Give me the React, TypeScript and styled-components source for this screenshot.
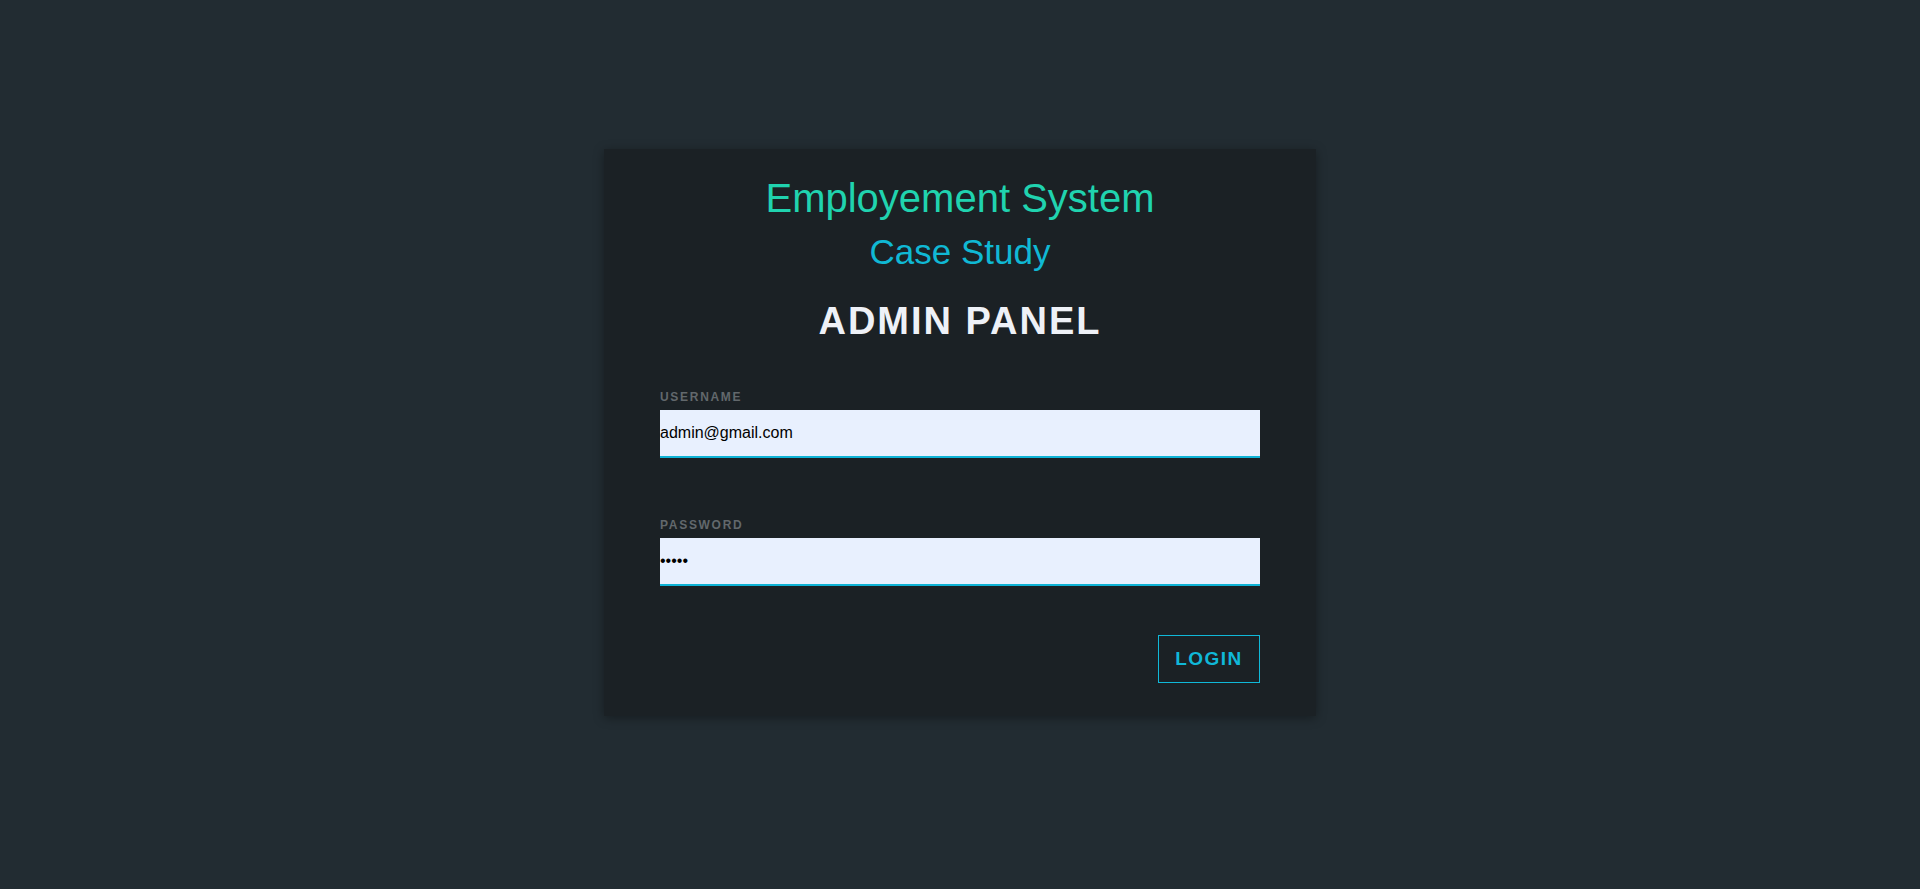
import React from "react";
import styled, { createGlobalStyle } from "styled-components";

const GlobalStyle = createGlobalStyle`
  html, body {
    margin: 0;
    padding: 0;
    background: #ffffff;
    font-family: "Liberation Sans", Arial, sans-serif;
  }
  * { box-sizing: border-box; }
`;

const Page = styled.div`
  height: 889px;
  background: #222c32;
  display: flex;
  justify-content: center;
  align-items: flex-start;
  padding-top: 149px;
`;

const Card = styled.form`
  width: 712px;
  background: #1b2125;
  box-shadow: 0 2px 10px rgba(0, 0, 0, 0.35);
  padding: 26px 56px 33px;
  display: flex;
  flex-direction: column;
`;

const Title = styled.h1`
  margin: 0;
  font-size: 40px;
  line-height: 46px;
  font-weight: 400;
  color: #20d3af;
  text-align: center;
`;

const Subtitle = styled.h2`
  margin: 11px 0 0;
  font-size: 35px;
  line-height: 40px;
  font-weight: 400;
  color: #10b8d4;
  text-align: center;
`;

const Heading = styled.h3`
  margin: 27px 0 0;
  font-size: 38px;
  line-height: 44px;
  font-weight: 700;
  letter-spacing: 2px;
  color: #eef1f7;
  text-align: center;
`;

const Field = styled.div<{ $gap: number }>`
  margin-top: ${(p) => p.$gap}px;
  display: flex;
  flex-direction: column;
  gap: 6px;
`;

const Label = styled.label`
  font-size: 12px;
  line-height: 14px;
  font-weight: 700;
  letter-spacing: 1.7px;
  color: #62686c;
  text-transform: uppercase;
`;

const Input = styled.input`
  display: block;
  width: 100%;
  height: 48px;
  margin: 0;
  padding: 0;
  border: none;
  border-bottom: 2px solid #0eb3d6;
  background: #e8f0fe;
  color: #000000;
  font-family: "Liberation Sans", Arial, sans-serif;
  font-size: 16px;
  outline: none;
`;

const Actions = styled.div`
  margin-top: 49px;
  display: flex;
  justify-content: flex-end;
`;

const LoginButton = styled.button`
  width: 102px;
  height: 48px;
  background: transparent;
  border: 1px solid #10b8d8;
  color: #10b8d8;
  font-family: "Liberation Sans", Arial, sans-serif;
  font-size: 19px;
  font-weight: 700;
  letter-spacing: 1.5px;
  padding: 0;
  cursor: pointer;
`;

export default function App() {
  return (
    <>
      <GlobalStyle />
      <Page>
        <Card onSubmit={(e) => e.preventDefault()}>
          <Title>Employement System</Title>
          <Subtitle>Case Study</Subtitle>
          <Heading>ADMIN PANEL</Heading>
          <Field $gap={47}>
            <Label htmlFor="username">Username</Label>
            <Input id="username" type="text" defaultValue="admin@gmail.com" />
          </Field>
          <Field $gap={60}>
            <Label htmlFor="password">Password</Label>
            <Input id="password" type="password" defaultValue="admin" />
          </Field>
          <Actions>
            <LoginButton type="submit">LOGIN</LoginButton>
          </Actions>
        </Card>
      </Page>
    </>
  );
}
